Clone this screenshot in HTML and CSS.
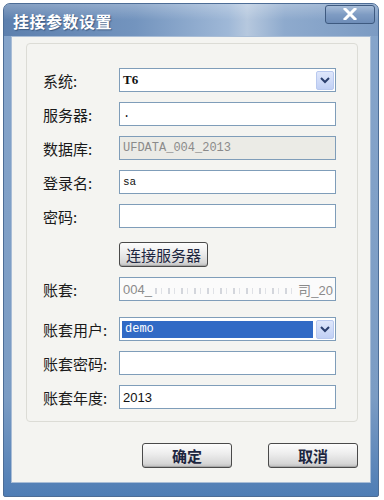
FILE: index.html
```html
<!DOCTYPE html>
<html lang="zh-CN">
<head>
<meta charset="UTF-8">
<title>挂接参数设置</title>
<link rel="stylesheet" href="styles.css">
</head>
<body>

<div class="window">
  <div class="titlebar">
    <span class="title">挂接参数设置</span>
    <div class="close">
      <svg width="14" height="12" viewBox="0 0 14 12">
        <path d="M2 1 L12 11 M12 1 L2 11" stroke="#fff" stroke-width="3" stroke-linecap="square"/>
      </svg>
    </div>
  </div>

  <div class="client">
    <div class="group">
      <div class="row">
        <label>系统:</label>
        <div class="field select">
          <span class="val serif bold">T6</span>
          <span class="drop">
            <svg width="10" height="7" viewBox="0 0 10 7"><path d="M1 1 L5 5 L9 1" fill="none" stroke="#2b3f6e" stroke-width="2"/></svg>
          </span>
        </div>
      </div>
      <div class="row">
        <label>服务器:</label>
        <div class="field"><span class="val mono">.</span></div>
      </div>
      <div class="row">
        <label>数据库:</label>
        <div class="field disabled"><span class="val mono gray">UFDATA_004_2013</span></div>
      </div>
      <div class="row">
        <label>登录名:</label>
        <div class="field"><span class="val mono small">sa</span></div>
      </div>
      <div class="row">
        <label>密码:</label>
        <div class="field"></div>
      </div>
      <div class="row btn-row">
        <label></label>
        <button class="btn">连接服务器</button>
      </div>
      <div class="row">
        <label>账套:</label>
        <div class="field blurred">
          <span class="val sans gray">004_</span><span class="fuzz"></span><span class="val sans gray tail">司_20</span>
        </div>
      </div>
      <div class="row gap-top">
        <label>账套用户:</label>
        <div class="field select">
          <span class="sel mono">demo</span>
          <span class="drop">
            <svg width="10" height="7" viewBox="0 0 10 7"><path d="M1 1 L5 5 L9 1" fill="none" stroke="#2b3f6e" stroke-width="2"/></svg>
          </span>
        </div>
      </div>
      <div class="row">
        <label>账套密码:</label>
        <div class="field"></div>
      </div>
      <div class="row">
        <label>账套年度:</label>
        <div class="field"><span class="val sans">2013</span></div>
      </div>
    </div>

    <div class="actions">
      <button class="btn wide">确定</button>
      <button class="btn wide">取消</button>
    </div>
  </div>
</div>

</body>
</html>
```

FILE: styles.css
```css
body {
    margin: 0;
    padding: 3px;
    background-color: #fff;
    font-family: "Noto Sans CJK SC", "Noto Sans", sans-serif;
}

.window {
    width: 376px;
    height: 494px;
    box-sizing: border-box;
    display: flex;
    flex-direction: column;
    border: 1px solid #4d6d96;
    border-radius: 7px 7px 2px 2px;
    background: linear-gradient(180deg, #86a5cb 0%, #7b9cc4 80%, #4f7db5 100%);
    padding: 0 7px 13px 7px;
}

.titlebar {
    height: 32px;
    display: flex;
    align-items: center;
    justify-content: space-between;
    margin: 0 -7px;
    padding: 0 3px 0 9px;
    border-radius: 6px 6px 0 0;
    background:
        linear-gradient(180deg, rgba(255,255,255,0.25) 0%, rgba(255,255,255,0) 50%),
        linear-gradient(90deg, #5d80ae 0%, #7394be 35%, #9fb8d7 60%, #b6c8de 65%, #8eaacd 75%, #7c9bc3 100%);
}

.title {
    color: #fff;
    font-size: 16px;
    font-weight: bold;
    letter-spacing: 0.5px;
    text-shadow: 1px 1px 1px #3d5a80;
    margin-top: 2px;
}

.close {
    width: 48px;
    height: 17px;
    margin-top: -12px;
    display: flex;
    align-items: center;
    justify-content: center;
    border: 1px solid #3e5a80;
    border-radius: 3px;
    background: linear-gradient(180deg, #a6bcd8 0%, #7f9cc3 50%, #6e8db8 100%);
}

.client {
    flex: 1;
    display: flex;
    flex-direction: column;
    background-color: #f4f4f1;
    border: 1px solid #a9bdd6;
    padding: 6px 12px 0 14px;
}

.group {
    border: 1px solid #dcdcd6;
    border-radius: 4px;
    padding: 24px 21px 12px 16px;
    display: flex;
    flex-direction: column;
    gap: 10px;
}

.row {
    display: flex;
    align-items: center;
}

.row label {
    width: 76px;
    font-size: 15px;
    color: #1a1a1a;
}

.row.btn-row {
    margin-top: 4px;
}

.row.gap-top {
    margin-top: 6px;
}

.field {
    flex: 1;
    height: 24px;
    box-sizing: border-box;
    border: 1px solid #7f9db9;
    background-color: #fff;
    display: flex;
    align-items: center;
    padding: 0 2px;
    overflow: hidden;
    white-space: nowrap;
}

.field.disabled {
    background-color: #ebebe6;
}

.field.blurred {
    background-color: #fbfbfb;
}

.val {
    font-size: 13px;
    color: #111;
    padding-left: 1px;
}

.serif {
    font-family: "Liberation Serif", serif;
}

.bold {
    font-weight: bold;
}

.mono {
    font-family: "Liberation Mono", monospace;
    font-size: 12px;
}

.mono.small {
    font-size: 11px;
}

.sans {
    font-family: "Liberation Sans", Arial, sans-serif;
    font-size: 13px;
}

.gray {
    color: #8a8a8a;
}

.tail {
    flex-shrink: 0;
    padding-left: 0;
}

.fuzz {
    flex: 1;
    height: 6px;
    margin: 4px 4px 0 3px;
    background: repeating-linear-gradient(90deg, #c2c6cf 0 2px, transparent 2px 6px, #d4d7de 6px 7px, transparent 7px 13px);
    opacity: 0.7;
}

.select {
    justify-content: space-between;
    padding-right: 1px;
}

.sel {
    background-color: #316ac5;
    color: #fff;
    flex: 1;
    height: 17px;
    line-height: 17px;
    padding-left: 3px;
    margin-right: 3px;
}

.drop {
    width: 18px;
    height: 19px;
    box-sizing: border-box;
    border: 1px solid #b9c9ef;
    border-radius: 2px;
    background: linear-gradient(180deg, #dfe7fb 0%, #c1d0f5 100%);
    display: flex;
    align-items: center;
    justify-content: center;
}

.btn {
    height: 25px;
    padding: 0 6px;
    border: 1px solid #4a4a4a;
    border-radius: 3px;
    background: linear-gradient(180deg, #fdfdfd 0%, #ececec 45%, #d6d6d6 85%, #bdbdbd 100%);
    font-family: "Noto Sans CJK SC", sans-serif;
    font-size: 15px;
    color: #1d2640;
    box-shadow: inset 0 -1px 0 #a8a8a8;
}

.actions {
    display: flex;
    justify-content: flex-end;
    gap: 36px;
    margin-top: 21px;
}

.btn.wide {
    width: 90px;
    font-weight: bold;
}
```
